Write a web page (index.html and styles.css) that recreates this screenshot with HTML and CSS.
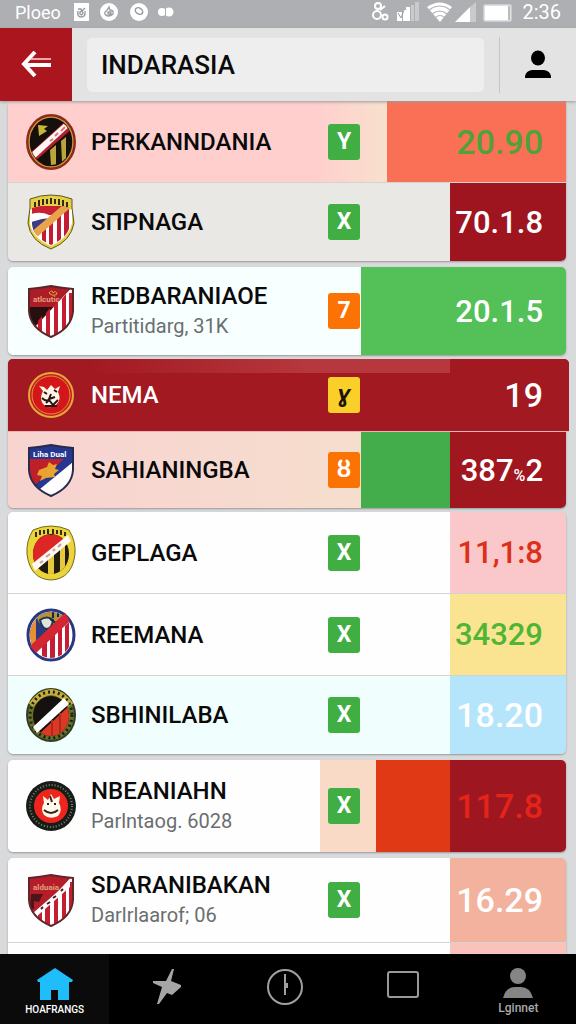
FILE: index.html
```html
<!DOCTYPE html>
<html lang="id">

<head>
    <meta charset="UTF-8">
    <meta name="viewport" content="width=device-width, initial-scale=1.0">
    <title>Indarasia</title>
    <link rel="stylesheet" href="styles.css">
</head>

<body>

    <!-- shared crest outlines -->
    <svg class="defs" width="0" height="0" aria-hidden="true">
        <defs>
            <clipPath id="round"><ellipse cx="25" cy="28" rx="21" ry="23"/></clipPath>
            <clipPath id="disc"><ellipse cx="25" cy="29" rx="18" ry="20"/></clipPath>
            <clipPath id="shield"><path d="M3 6Q14 5 25 3Q36 5 47 6V28Q46 45 25 54Q4 45 3 28Z"/></clipPath>
            <clipPath id="inner"><path d="M6 14Q25 8 44 14V30Q43 43 25 51Q7 43 6 30Z"/></clipPath>
        </defs>
    </svg>

    <div class="statusbar">
        <span class="carrier">Ploeo</span>
        <svg class="notices" width="102" height="20" viewBox="0 0 102 20" aria-hidden="true">
            <rect x="0" y="1" width="15" height="18" fill="#fff"/>
            <path d="M4 7h3l1 2 3-3M4 9q-1 6 3 6q5 0 4-6M6 10q2-2 3 1q-1 3-3 1z" fill="none" stroke="#999b9e" stroke-width="1.4"/>
            <circle cx="35" cy="10" r="9" fill="#fff"/>
            <path d="M35 5l1 3q4 0 3 4q-2 2-5 2q-4-1-3-4q2-1 4-5zM34 10h3v2h-3z" fill="none" stroke="#999b9e" stroke-width="1.3"/>
            <circle cx="65" cy="10" r="9" fill="#fff"/>
            <ellipse cx="65" cy="9" rx="4" ry="3" transform="rotate(35 65 9)" fill="none" stroke="#999b9e" stroke-width="1.5"/>
            <circle cx="88" cy="10" r="4" fill="#fff"/>
            <circle cx="95" cy="10" r="4.5" fill="#fff"/>
            <path d="M91.500 6v8" stroke="#aaacae"/>
        </svg>
        <svg class="signals" width="142" height="20" viewBox="0 0 142 20" aria-hidden="true">
            <g fill="none" stroke="#fff" stroke-width="2">
                <circle cx="6" cy="4" r="3"/>
                <circle cx="5" cy="13" r="4"/>
                <circle cx="13" cy="15" r="2.500"/>
                <path d="M8 8l5-4"/>
            </g>
            <path d="M25 10h5v9h-5zM31 8h3v11h-3zM34 5h4v14h-4z" fill="#fff"/>
            <path d="M26 11l3 5 3-8" fill="none" stroke="#999b9e"/>
            <path d="M39 3h3v16h-3zM43 0h4v19h-4z" fill="#c8cacc"/>
            <path d="M55 5q13-9 25 0L68 20z" fill="#fff"/>
            <path d="M57 8q11-8 21 0M60 12q8-6 15 0M64 15q4-3 8 0" fill="none" stroke="#b1b3b6" stroke-width="1.2"/>
            <path d="M83 20L98 5v15z" fill="#fff"/>
            <path d="M98 5l6-5v20h-6z" fill="#c8cacc"/>
            <rect x="112" y="3" width="27" height="16" rx="1" fill="#fff" stroke="#d5d6d8" stroke-width="1.500"/>
            <path d="M137 4v14" stroke="#a4a6a9" stroke-width="1.500"/>
        </svg>
        <time class="clock">2:36</time>
    </div>

    <header class="topbar">
        <button class="back" type="button" aria-label="Back">
            <svg width="30" height="28" viewBox="0 0 30 28">
                <path d="M14 1L3 13l11 12" fill="none" stroke="#fff" stroke-width="4"/>
                <path d="M3 14h27" stroke="#fff" stroke-width="4"/>
                <path d="M10 8h20" stroke="#f0a5a8" stroke-width="2"/>
            </svg>
        </button>
        <input class="search" type="text" value="INDARASIA" aria-label="Search">
        <button class="account" type="button" aria-label="Account">
            <svg width="28" height="30" viewBox="0 0 28 30">
                <ellipse cx="14" cy="8" rx="7" ry="7.500"/>
                <path d="M1 28v-2q1-5 7-6h12q6 1 7 6v2z"/>
            </svg>
        </button>
    </header>

    <main class="list">

        <section class="card first">
            <div class="row pink">
                <svg class="crest" viewBox="0 0 50 56" aria-hidden="true">
                    <ellipse cx="25" cy="28" rx="24" ry="27" fill="#15100c" stroke="#8b2f1b" stroke-width="2"/>
                    <ellipse cx="25" cy="28" rx="22" ry="25" fill="none" stroke="#dc8a3c" stroke-width="1.500"/>
                    <g clip-path="url(#round)">
                        <path d="M12 11l10 1-4 3 3 2-8 5z" fill="#c9b53a"/>
                        <path d="M24 36l6-5v21h-5zM35 27l5-4v25h-4z" fill="#b8a63a"/>
                        <path d="M2 41L43 4l6 8L7 49z" fill="#b3202c"/>
                        <path d="M3 41L42 6l3 5L7 46z" fill="#fff5f3"/>
                        <path d="M24 27l3-2M29 22l3-3M35 17l4-4" stroke="#d77" stroke-width="2"/>
                    </g>
                </svg>
                <div class="info"><h2>PERKANNDANIA</h2></div>
                <span class="badge">Y</span>
                <span class="value green-text">20.90</span>
            </div>
            <div class="row stone">
                <svg class="crest" viewBox="0 0 50 56" aria-hidden="true">
                    <path d="M4 5Q25-3 46 5V14L48 29Q45 47 25 55Q4 47 2 29L4 14Z" fill="#e6ce45" stroke="#5e571c"/>
                    <path d="M4 16Q25 8 46 16V29Q43 44 25 52Q6 44 4 29Z" fill="#fff"/>
                    <g clip-path="url(#inner)">
                        <path d="M5 12h40L8 43z" fill="#c92033"/>
                        <path d="M5 24q10-5 16 0l12-2L15 38H5z" fill="#3d3b84"/>
                        <path d="M5 20q10-3 18 1h9l-4 4q-8-1-12 0l-11 3z" fill="#fff"/>
                        <path d="M16 38l4-4v18h-4zM23 31l4-4v25h-4zM31 24l4-4v28h-4zM38 18l5-4v30h-5z" fill="#c31b32"/>
                        <path d="M5 38L37 11l7 3L10 44z" fill="#e9a34c"/>
                    </g>
                    <path class="mottled" d="M9 8v5M13 6v6M17 5v6M21 5v5M25 4v6M29 5v5M33 5v6M37 6v6M41 8v5"/>
                </svg>
                <div class="info"><h2>SΠPNAGA</h2></div>
                <span class="badge">X</span>
                <span class="value dense">70.1.8</span>
            </div>
        </section>

        <section class="card">
            <div class="row lime tall">
                <svg class="crest" viewBox="0 0 50 56" aria-hidden="true">
                    <path d="M3 6Q14 5 25 3Q36 5 47 6V28Q46 45 25 54Q4 45 3 28Z" fill="#fff"/>
                    <g clip-path="url(#shield)">
                        <path d="M0 0h50L10 43H0z" fill="#ae1c27"/>
                        <path d="M3 24h24L10 42H3z" fill="#24100f"/>
                        <path d="M12 38l4-5v22h-4zM20 30l4-5v30h-4zM28 23l4-5v37h-4zM36 16l4-5v38h-4zM43 10h6v34h-6z" fill="#c41d32"/>
                    </g>
                    <path d="M3 6Q14 5 25 3Q36 5 47 6V28Q46 45 25 54Q4 45 3 28Z" fill="none" stroke="#5a262a" stroke-width="2"/>
                    <path d="M23 10q3-4 4 0q3-3 4 1q-4 3-8-1z" fill="none" stroke="#e0ae3c"/>
                    <text x="7" y="19" class="tiny gold">atlcutic</text>
                </svg>
                <div class="info"><h2>REDBARANIAOE</h2><p>Partitidarg, 31K</p></div>
                <span class="badge orange">7</span>
                <span class="value dense">20.1.5</span>
            </div>
        </section>

        <section class="card tight">
            <div class="row selected">
                <svg class="crest" viewBox="0 0 50 56" aria-hidden="true">
                    <circle cx="25" cy="28" r="22" fill="#c81c20" stroke="#e2aa38" stroke-width="2"/>
                    <circle cx="25" cy="28" r="19" fill="#d3161a" stroke="#e0963a"/>
                    <path d="M13 19l5 1 3 3 4-5 4 4 5-3-2 6q4 8-2 13-7 5-13-1-4-6 0-13z" fill="#fff3e8"/>
                    <path d="M18 25l3 2M28 23l3 2M16 31q5 5 9 0M20 36l3-3 4 5 5-5M25 27l-2 5 6-2M19 39h12" fill="none" stroke="#2a1414" stroke-width="2"/>
                </svg>
                <div class="info"><h2>NEMA</h2></div>
                <span class="badge yellow">ɣ</span>
                <span class="value">19</span>
            </div>
            <div class="row mixed">
                <svg class="crest" viewBox="0 0 50 56" aria-hidden="true">
                    <g clip-path="url(#shield)">
                        <path d="M0 0h50v56H0z" fill="#25378f"/>
                        <path d="M3 17h39L9 44H3z" fill="#be1f29"/>
                        <path d="M47 16v38H22L10 45z" fill="#fff"/>
                        <path d="M38 17h9v3L14 47l-5-4z" fill="#25378f"/>
                        <path d="M13 28l8-3 2-5 4 3 4-1-2 5 4 1-5 4 1 3-9 1-6 3 2-5-5-1z" fill="#e9a32f"/>
                    </g>
                    <path d="M3 6Q14 5 25 3Q36 5 47 6V28Q46 45 25 54Q4 45 3 28Z" fill="none" stroke="#282b4c" stroke-width="2"/>
                    <text x="7" y="15" class="tiny">Liha Dual</text>
                </svg>
                <div class="info"><h2>SAHIANINGBA</h2></div>
                <span class="badge orange">ȣ</span>
                <span class="value dense">387<small>%</small>2</span>
            </div>
        </section>

        <section class="card">
            <div class="row rose">
                <svg class="crest" viewBox="0 0 50 56" aria-hidden="true">
                    <path d="M7 5Q25-3 43 5Q50 16 49 29Q46 54 25 55Q4 54 1 29Q0 16 7 5Z" fill="#ead437" stroke="#746923"/>
                    <g clip-path="url(#disc)">
                        <path d="M4 5h42v46H4z" fill="#201b0d"/>
                        <path d="M6 10h37L7 43z" fill="#de2724"/>
                        <path d="M22 34l6-5v23h-6zM34 24l5-4v31h-5z" fill="#e5c83d"/>
                    </g>
                    <path d="M6 39L42 10l3 6L9 46z" fill="#fffaf3"/>
                    <path d="M14 38l3-2M20 32l4-3M27 26l2-2M32 22l3-3" stroke="#c99" stroke-width="2"/>
                    <path class="mottled" d="M10 7v5M14 5v5M18 5v4M22 4v5M27 4v5M31 5v4M35 5v5M39 7v4"/>
                </svg>
                <div class="info"><h2>GEPLAGA</h2></div>
                <span class="badge">X</span>
                <span class="value red-text dense">11,1:8</span>
            </div>
            <div class="row sand">
                <svg class="crest" viewBox="0 0 50 56" aria-hidden="true">
                    <ellipse cx="25" cy="28" rx="23" ry="25" fill="#fff" stroke="#28377e" stroke-width="3"/>
                    <g clip-path="url(#round)">
                        <path d="M3 4h45L5 45z" fill="#283b7e"/>
                        <path d="M3 4h7v38H3z" fill="#e79134"/>
                        <path d="M10 6q15-6 30 0l-7 8-9 7q-12 0-14-15z" fill="#b89136"/>
                        <path d="M14 13q7-5 13 0q-1 8-6 9q-5 0-7-9z" fill="#dce4dc" stroke="#23335a" stroke-width="2"/>
                        <path d="M24 12l6 4 5-4M27 5v6M32 5v5" fill="none" stroke="#142548" stroke-width="2"/>
                        <path d="M16 39l5-5v21h-5zM24 31l5-5v29h-5zM32 24l4-4v32h-4zM39 19l4-4v30h-4z" fill="#c61d35"/>
                    </g>
                    <path d="M4 39L39 6l5 8L10 46z" fill="#d32532"/>
                </svg>
                <div class="info"><h2>REEMANA</h2></div>
                <span class="badge">X</span>
                <span class="value green-text dense">34329</span>
            </div>
            <div class="row sky">
                <svg class="crest" viewBox="0 0 50 56" aria-hidden="true">
                    <ellipse cx="25" cy="28" rx="24" ry="26" fill="#68702a" stroke="#303f22" stroke-width="2"/>
                    <path d="M5 18Q25-8 45 18" fill="none" stroke="#c7ad3c" stroke-width="6"/>
                    <ellipse cx="25" cy="28" rx="21" ry="23" fill="none" stroke="#182114" stroke-width="3" stroke-dasharray="2 3"/>
                    <g clip-path="url(#disc)">
                        <path d="M4 5h42v46H4z" fill="#14110e"/>
                        <path d="M10 50L43 19v32z" fill="#dd3824"/>
                        <path d="M26 33v18M34 26v24" stroke="#a92c20" stroke-width="2"/>
                    </g>
                    <path d="M7 40L38 11l5 6L11 46z" fill="#fff"/>
                </svg>
                <div class="info"><h2>SBHINILABA</h2></div>
                <span class="badge">X</span>
                <span class="value">18.20</span>
            </div>
        </section>

        <section class="card">
            <div class="row flame tall">
                <svg class="crest" viewBox="0 0 50 56" aria-hidden="true">
                    <circle cx="25" cy="28" r="25" fill="#171c19"/>
                    <circle cx="25" cy="28" r="21" fill="none" stroke="#80856c" stroke-width="2" stroke-dasharray="1 2"/>
                    <circle cx="25" cy="28" r="17" fill="#ee251d"/>
                    <path d="M17 18l5 4 3-6 3 5 6-3-1 7q4 7-1 13-8 4-14-1-4-6 0-12z" fill="#fff9ed"/>
                    <path d="M18 32q7 6 14 0M21 26h2M28 26h2M24 18l2 6" fill="none" stroke="#37230f" stroke-width="2"/>
                </svg>
                <div class="info"><h2>NBEANIAHN</h2><p>Parlntaog. 6028</p></div>
                <span class="badge">X</span>
                <span class="value bright-text">117.8</span>
            </div>
        </section>

        <section class="card">
            <div class="row peach">
                <svg class="crest" viewBox="0 0 50 56" aria-hidden="true">
                    <path d="M3 6Q14 5 25 3Q36 5 47 6V28Q46 45 25 54Q4 45 3 28Z" fill="#fff"/>
                    <g clip-path="url(#shield)">
                        <path d="M0 0h50L9 44H0z" fill="#b51d29"/>
                        <path d="M5 22h12l-4 8-5-1v8H4z" fill="#4b1519"/>
                        <path d="M12 42l4-4v17h-4zM19 35l5-4v24h-5zM28 27l4-4v32h-4zM36 20l4-4v36h-4zM43 10h5v38h-5z" fill="#c51e30"/>
                        <path d="M7 41L44 9v6L10 45z" fill="#fff"/>
                        <path d="M15 37l2-2M21 32l3-2M27 26l3-2M35 19l2-2" stroke="#4a1b1d" stroke-width="2"/>
                    </g>
                    <path d="M3 6Q14 5 25 3Q36 5 47 6V28Q46 45 25 54Q4 45 3 28Z" fill="none" stroke="#64242b" stroke-width="2"/>
                    <text x="7" y="18" class="tiny gold">alduaia</text>
                </svg>
                <div class="info"><h2>SDARANIBAKAN</h2><p>Darlrlaarof; 06</p></div>
                <span class="badge">X</span>
                <span class="value">16.29</span>
            </div>
            <div class="row blush"></div>
        </section>

    </main>

    <nav class="tabs">
        <a class="tab active" href="#home">
            <svg width="36" height="32" viewBox="0 0 36 32">
                <path d="M18 0L36 12l-1 2h-3v18H21V22h-7v10H3V14H1l-1-2z" fill="#20bdfb"/>
            </svg>
            HOAFRANGS
        </a>
        <a class="tab" href="#live" aria-label="Live">
            <svg width="30" height="36" viewBox="0 0 30 36">
                <path d="M20 1h2l-3 12 10 4v2l-9 8-5-2-8 11H5l5-17-9-4v-2h13z" fill="#a5a5a5"/>
            </svg>
        </a>
        <a class="tab" href="#recent" aria-label="Recent">
            <svg width="38" height="38" viewBox="0 0 38 38">
                <circle cx="19" cy="19" r="17" fill="none" stroke="#a0a0a0" stroke-width="2"/>
                <path d="M19 6v21M21 15v5" stroke="#a0a0a0" stroke-width="2"/>
            </svg>
        </a>
        <a class="tab" href="#board" aria-label="Board">
            <svg width="32" height="32" viewBox="0 0 32 32">
                <rect x="1" y="4" width="30" height="25" rx="2" fill="none" stroke="#999" stroke-width="2"/>
            </svg>
        </a>
        <a class="tab" href="#account">
            <svg width="30" height="30" viewBox="0 0 30 30">
                <circle cx="15" cy="8" r="8" fill="#858585"/>
                <path d="M0 30q3-11 12-11h6q9 0 12 11z" fill="#858585"/>
            </svg>
            Lginnet
        </a>
    </nav>

</body>
</html>
```

FILE: styles.css
```css
* {
    box-sizing: border-box;
}

body {
    display: flex;
    flex-direction: column;
    height: 100vh;
    margin: 0;
    background-color: #d9dadc;
    color: #0a0a0a;
    font-family: Roboto, "Liberation Sans", sans-serif;
}

button {
    border: 0;
    padding: 0;
    background: none;
}

h2,
p {
    margin: 0;
}

.defs {
    position: absolute;
}

/* status bar */

.statusbar {
    display: flex;
    align-items: center;
    flex: none;
    height: 28px;
    padding: 0 15px 4px;
    background-color: #adafb2;
    color: #fff;
}

.carrier {
    width: 59px;
    font-size: 18px;
}

.signals {
    margin-left: auto;
}

.clock {
    margin-left: 8px;
    font-size: 20px;
}

/* top bar */

.topbar {
    display: flex;
    align-items: center;
    flex: none;
    height: 73px;
    background-color: #e3e3e4;
    box-shadow: 0 1px 3px #999;
    z-index: 1;
}

.back {
    display: flex;
    align-items: center;
    justify-content: center;
    align-self: stretch;
    width: 72px;
    background-color: #ab151d;
}

.search {
    flex: 1;
    min-width: 0;
    height: 54px;
    margin: 0 15px;
    padding: 0 14px;
    border: 0;
    border-radius: 5px;
    background-color: #eeeeef;
    color: #0a0a0a;
    font-family: inherit;
    font-size: 26px;
    font-weight: 500;
}

.account {
    display: flex;
    align-items: center;
    justify-content: center;
    width: 77px;
    height: 56px;
    border-left: 1px solid #c5c6c8;
}

/* score list */

.list {
    flex: 1;
    min-height: 0;
    padding: 0 10px 0 8px;
    overflow-y: auto;
    scrollbar-width: none;
}

.card {
    margin-bottom: 6px;
    border-radius: 5px;
    box-shadow: 0 1px 2px #999;
}

.card.tight {
    margin-top: -2px;
    margin-bottom: 4px;
}

.row {
    display: grid;
    grid-template-columns: 50px 1fr 32px 168px;
    align-items: center;
    column-gap: 15px;
    height: 82px;
    padding: 0 23px 0 18px;
    border-bottom: 1px solid #d5d2d2;
}

.row:first-child {
    border-radius: 5px 5px 0 0;
}

.row:last-child {
    height: 78px;
    border-bottom: 0;
    border-radius: 0 0 5px 5px;
}

.row:only-child {
    border-radius: 5px;
}

.first .row:first-child {
    border-radius: 0;
}

.row.tall {
    height: 88px;
}

.crest {
    width: 50px;
    height: 56px;
}

.tiny {
    fill: #fff;
    font-size: 8px;
    font-weight: 700;
}

.tiny.gold {
    fill: #e0a17c;
}

.mottled {
    fill: none;
    stroke: #302c15;
    stroke-width: 2;
}

.info {
    white-space: nowrap;
}

.info h2 {
    font-size: 24px;
    font-weight: 500;
    line-height: 30px;
}

.info p {
    color: #6b6e70;
    font-size: 20px;
    line-height: 30px;
}

.badge {
    height: 36px;
    border-radius: 3px;
    background-color: #40ae42;
    color: #fff;
    font-size: 23px;
    font-weight: 700;
    line-height: 36px;
    text-align: center;
}

.badge.orange {
    background-color: #fb7305;
}

.badge.yellow {
    background-color: #fbcf2a;
    color: #1a1408;
    font-style: italic;
}

.value {
    color: #fff;
    font-size: 34px;
    font-weight: 500;
    text-align: right;
    white-space: nowrap;
}

.value.dense {
    font-size: 31px;
}

.value small {
    font-size: 16px;
}

.green-text {
    color: #4fa238;
}

.sand .green-text {
    color: #50b535;
}

.red-text {
    color: #da3118;
}

.bright-text {
    color: #e42319;
}

/* row colours, with the bars measured from the right edge */

.pink {
    background: linear-gradient(to left, #fa7056 179px, #f8e0cc 179px, #ffcfce 250px);
}

.stone {
    background: linear-gradient(to left, #9f151f 116px, #eae8e5 116px);
}

.lime {
    background: linear-gradient(to left, #53c158 205px, #f8ffff 205px);
}

.row.selected {
    height: 73px;
    margin-right: -3px;
    padding-right: 26px;
    border-bottom-color: #e4b5b2;
    background: linear-gradient(to left, #a21922 119px, #b6373d 119px, #b6373d 260px, #a21922 480px) top / 100% 14px no-repeat #a21922;
    color: #fff;
}

.row.mixed {
    height: 76px;
    background: linear-gradient(to left, #a01720 116px, #43ad4c 116px, #43ad4c 205px, #f6decd 205px, #f8d4d1 500px);
}

.rose {
    background: linear-gradient(to left, #fac7ca 116px, #fefefe 116px);
}

.sand {
    background: linear-gradient(to left, #fae491 116px, #fefefe 116px);
}

.sky {
    background: linear-gradient(to left, #b5e5fa 116px, #f1fefe 116px);
}

.flame {
    background: linear-gradient(to left, #9e1620 116px, #df3915 116px, #df3915 190px, #f8dac7 190px, #f8dac7 246px, #fefefe 246px);
}

.row.tall.flame {
    height: 92px;
}

.row.peach {
    height: 85px;
    background: linear-gradient(to left, #f3b29d 116px, #fefefe 116px);
}

.row.blush {
    background: linear-gradient(to left, #f9c3bc 116px, #fefefe 116px);
}

/* bottom tabs */

.tabs {
    display: grid;
    grid-template-columns: 19fr 20fr 21fr 20fr 20fr;
    flex: none;
    height: 70px;
    background-color: #000;
}

.tab {
    display: flex;
    flex-direction: column;
    align-items: center;
    gap: 2px;
    padding-top: 14px;
    color: #aaa;
    font-size: 12px;
    font-weight: 500;
    line-height: 16px;
    text-decoration: none;
}

.tab.active {
    background-color: #0b0b0b;
    color: #fff;
    font-size: 10px;
}
```
